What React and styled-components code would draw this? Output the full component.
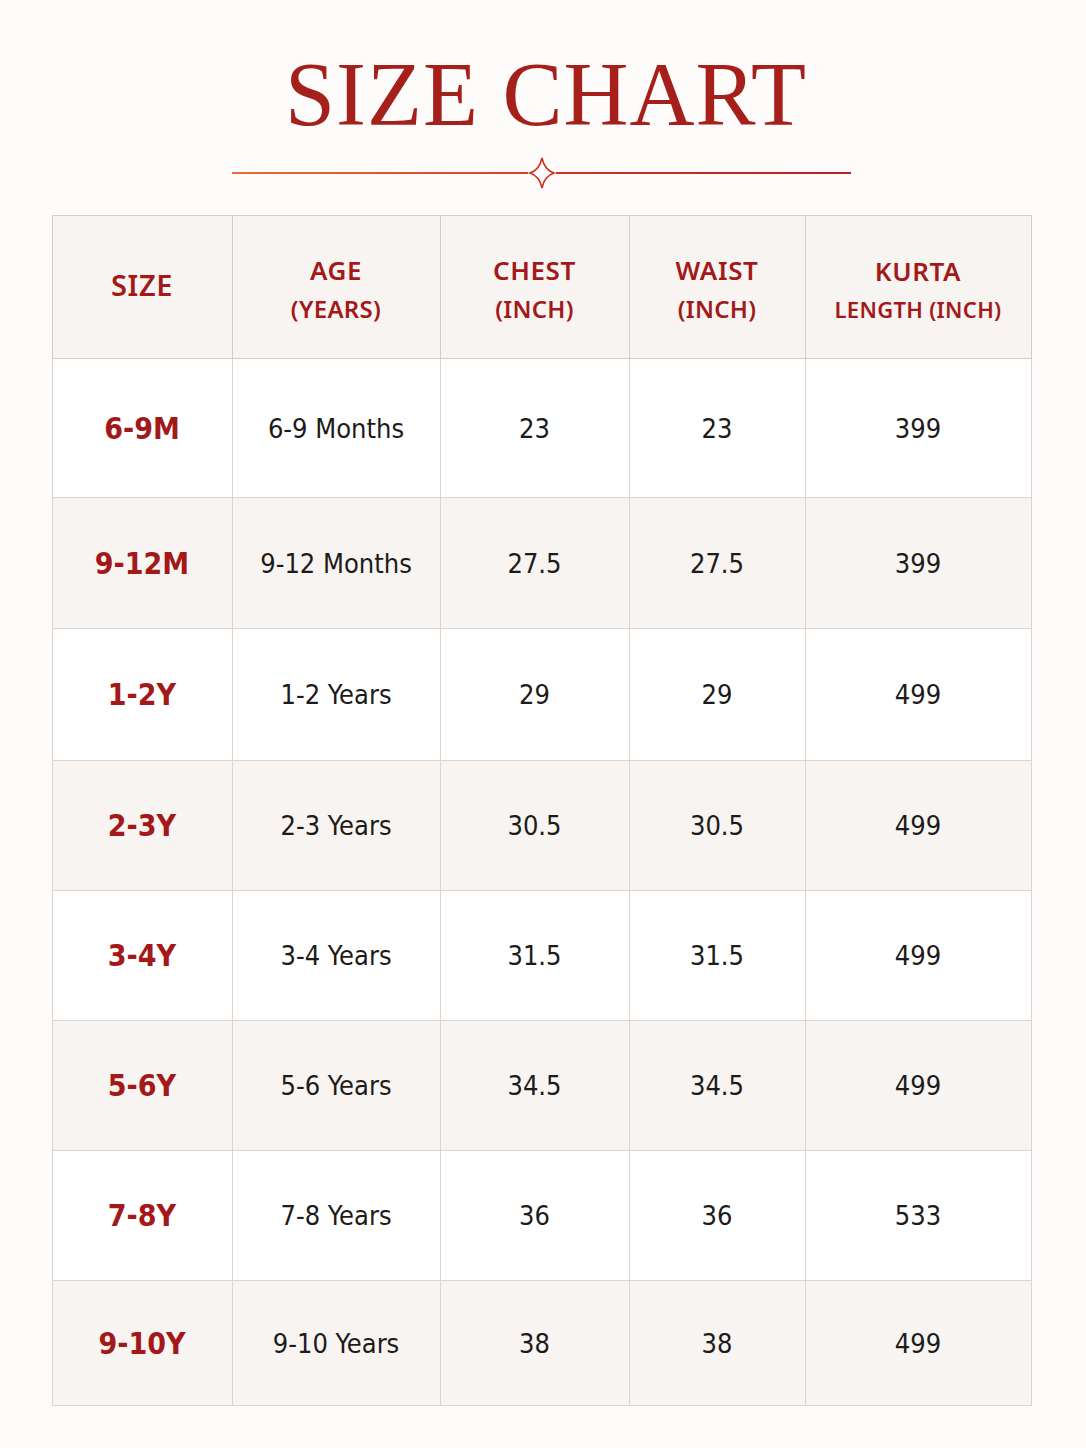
import React from "react";
import styled, { createGlobalStyle } from "styled-components";

const GlobalStyle = createGlobalStyle`
  body {
    margin: 0;
    background: #fdfcfb;
    font-family: "DejaVu Sans", sans-serif;
  }
`;

const columns = [
  { top: "SIZE", bottom: null, width: 180 },
  { top: "AGE", bottom: "(YEARS)", width: 208 },
  { top: "CHEST", bottom: "(INCH)", width: 189 },
  { top: "WAIST", bottom: "(INCH)", width: 176 },
  { top: "KURTA", bottom: "LENGTH (INCH)", width: 226 },
];

const rows = [
  { size: "6-9M", age: "6-9 Months", chest: "23", waist: "23", length: "399", h: 139 },
  { size: "9-12M", age: "9-12 Months", chest: "27.5", waist: "27.5", length: "399", h: 131 },
  { size: "1-2Y", age: "1-2 Years", chest: "29", waist: "29", length: "499", h: 132 },
  { size: "2-3Y", age: "2-3 Years", chest: "30.5", waist: "30.5", length: "499", h: 130 },
  { size: "3-4Y", age: "3-4 Years", chest: "31.5", waist: "31.5", length: "499", h: 130 },
  { size: "5-6Y", age: "5-6 Years", chest: "34.5", waist: "34.5", length: "499", h: 130 },
  { size: "7-8Y", age: "7-8 Years", chest: "36", waist: "36", length: "533", h: 130 },
  { size: "9-10Y", age: "9-10 Years", chest: "38", waist: "38", length: "499", h: 125 },
];

const Page = styled.div`
  width: 1086px;
  padding: 50px 0 40px;
  display: flex;
  flex-direction: column;
  align-items: center;
`;

const Title = styled.h1`
  margin: 0 0 0 6px;
  font-family: "Liberation Serif", serif;
  font-weight: normal;
  font-size: 90px;
  line-height: 1;
  letter-spacing: 1px;
  color: #a51f1b;
`;

const Divider = styled.div`
  width: 619px;
  height: 34px;
  margin: 16px 0 25px -3px;
  display: flex;
  align-items: center;
`;

const Rule = styled.div`
  flex: 1;
  height: 1.5px;
  background: ${(p) => p.$bg};
`;

const Table = styled.table`
  border-collapse: collapse;
  margin-left: -3px;
  border: 1.5px solid #d6ccc6;
`;

const Head = styled.th`
  height: 142px;
  padding: 0;
  background: #f8f4f1;
  border: 1.5px solid #d6ccc6;
  color: #a3191a;
  font-family: "Noto Sans", "Open Sans", sans-serif;
  font-weight: 600;
  text-align: center;
  vertical-align: middle;
`;

const HeadTop = styled.div`
  font-size: ${(p) => (p.$single ? "29px" : "26px")};
  letter-spacing: 0.6px;
  line-height: 1;
  margin-bottom: 14px;
  margin-top: ${(p) => (p.$single ? "8px" : "4px")};
`;

const HeadBottom = styled.div`
  font-size: ${(p) => (p.$small ? "22px" : "24px")};
  letter-spacing: 0.3px;
  line-height: 1;
`;

const Row = styled.tr`
  background: ${(p) => (p.$alt ? "#f8f4f1" : "#ffffff")};
`;

const Cell = styled.td`
  padding: 0;
  border: 1.5px solid #ddd4ce;
  text-align: center;
  vertical-align: middle;
  font-family: "DejaVu Sans Condensed", "DejaVu Sans", sans-serif;
  font-size: 27px;
  color: #1d1b1a;
`;

const SizeCell = styled(Cell)`
  font-weight: bold;
  font-size: 30px;
  color: #a3191a;
`;

function Star() {
  return (
    <svg width="28" height="34" viewBox="-14 -17 28 34">
      <path
        d="M0 -15 Q2.5 -3 12 0 Q2.5 3 0 15 Q-2.5 3 -12 0 Q-2.5 -3 0 -15 Z"
        fill="#fdfcfb"
        stroke="#c93222"
        strokeWidth="1.6"
      />
    </svg>
  );
}

export default function App() {
  return (
    <>
      <GlobalStyle />
      <Page>
        <Title>SIZE CHART</Title>
        <Divider>
          <Rule $bg="linear-gradient(90deg, #ea6a38, #d2432a)" />
          <Star />
          <Rule $bg="linear-gradient(90deg, #cc3526, #b3231f)" />
        </Divider>
        <Table>
          <colgroup>
            {columns.map((c) => (
              <col key={c.top} style={{ width: c.width }} />
            ))}
          </colgroup>
          <thead>
            <tr>
              {columns.map((c) => (
                <Head key={c.top}>
                  <HeadTop $single={!c.bottom}>{c.top}</HeadTop>
                  {c.bottom && <HeadBottom $small={c.bottom.length > 8}>{c.bottom}</HeadBottom>}
                </Head>
              ))}
            </tr>
          </thead>
          <tbody>
            {rows.map((r, i) => (
              <Row key={r.size} $alt={i % 2 === 1} style={{ height: r.h }}>
                <SizeCell>{r.size}</SizeCell>
                <Cell>{r.age}</Cell>
                <Cell>{r.chest}</Cell>
                <Cell>{r.waist}</Cell>
                <Cell>{r.length}</Cell>
              </Row>
            ))}
          </tbody>
        </Table>
      </Page>
    </>
  );
}
